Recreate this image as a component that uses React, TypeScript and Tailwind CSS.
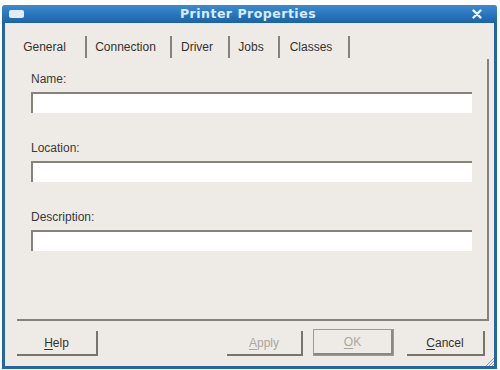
import React from 'react';

const tabs = [
  { label: 'General', width: 'w-[77px]' },
  { label: 'Connection', width: 'w-[85px]' },
  { label: 'Driver', width: 'w-[58px]' },
  { label: 'Jobs', width: 'w-[50px]' },
  { label: 'Classes', width: 'w-[70px]' },
];

const fields = ['Name:', 'Location:', 'Description:'];

function Mnemonic({ text, disabled }: { text: string; disabled?: boolean }) {
  return (
    <span className={disabled ? 'text-[#a9a6a1]' : 'text-[#33322f]'}>
      <span className="underline underline-offset-2">{text[0]}</span>
      {text.slice(1)}
    </span>
  );
}

export default function App() {
  return (
    <div
      className="w-[500px] h-[370px] bg-white pt-[5px] pl-[2px] pr-[3px] overflow-hidden"
      style={{ fontFamily: '"Liberation Sans", Arial, sans-serif' }}
    >
      <div className="h-[364px] flex flex-col relative border-x-[3px] border-b-[3px] border-[#2466a3] rounded-t-[4px] bg-[#2466a3]">
        {/* title bar */}
        <div className="h-[18px] flex items-center bg-gradient-to-b from-[#3b8bd2] to-[#1a63a8] rounded-t-[3px] -mx-[3px] px-[7px]">
          <div className="w-[15px] h-[8px] rounded-[2px] bg-[#e3ecf6]" />
          <div
            className="flex-1 text-center text-[12.5px] font-bold tracking-[0.5px] text-[#d9edff]"
            style={{ fontFamily: '"DejaVu Sans", sans-serif' }}
          >
            Printer Properties
          </div>
          <svg width="10" height="10" viewBox="0 0 10 10" className="mr-[8px]">
            <path d="M1.5 1.5 L8.5 8.5 M8.5 1.5 L1.5 8.5" stroke="#f2f7fc" strokeWidth="2.4" strokeLinecap="round" />
          </svg>
        </div>

        {/* body */}
        <div className="flex-1 bg-[#eeebe6] flex flex-col">
          {/* tabs */}
          <div className="flex mt-[13px] ml-[5px] h-[22px]">
            {tabs.map((t) => (
              <div
                key={t.label}
                className={`${t.width} h-[22px] flex items-center justify-center pr-[6px] border-r-2 border-[#85827d] text-[12px] text-[#33322f]`}
              >
                {t.label}
              </div>
            ))}
          </div>

          {/* panel */}
          <div className="ml-[12px] w-[472px] h-[262px] mt-[1px] border-r-2 border-b-2 border-[#85827d] pl-[14px] pt-[13px]">
            {fields.map((f, i) => (
              <div key={f} className={i > 0 ? 'mt-[28px]' : ''}>
                <div className="text-[12px] leading-[14px] text-[#3a3936]">{f}</div>
                <div className="mt-[6px] w-[441px] h-[21px] bg-white border-t-2 border-l-2 border-[#85827d]" />
              </div>
            ))}
          </div>

          {/* buttons */}
          <div className="flex mt-[10px] ml-[12px] text-[12px]">
            <div className="w-[81px] h-[25px] flex items-center justify-center border-r-2 border-b-2 border-[#78756f]">
              <Mnemonic text="Help" />
            </div>
            <div className="ml-[129px] w-[76px] h-[25px] flex items-center justify-center border-r-2 border-b-2 border-[#78756f]">
              <Mnemonic text="Apply" disabled />
            </div>
            <div className="ml-[10px] -mt-[2px] w-[81px] h-[27px] border border-[#9e9b96] flex">
              <div className="flex-1 flex items-center justify-center border-r-2 border-b-2 border-[#8b8883]">
                <Mnemonic text="OK" disabled />
              </div>
            </div>
            <div className="ml-[13px] w-[78px] h-[25px] flex items-center justify-center border-r-2 border-b-2 border-[#78756f]">
              <Mnemonic text="Cancel" />
            </div>
          </div>
        </div>

        {/* resize grip */}
        <svg width="9" height="9" viewBox="0 0 9 9" className="absolute right-0 bottom-0">
          <path d="M9 1 L1 9 M9 4 L4 9 M9 7 L7 9" stroke="#8a9bb0" strokeWidth="1" />
        </svg>
      </div>
    </div>
  );
}
